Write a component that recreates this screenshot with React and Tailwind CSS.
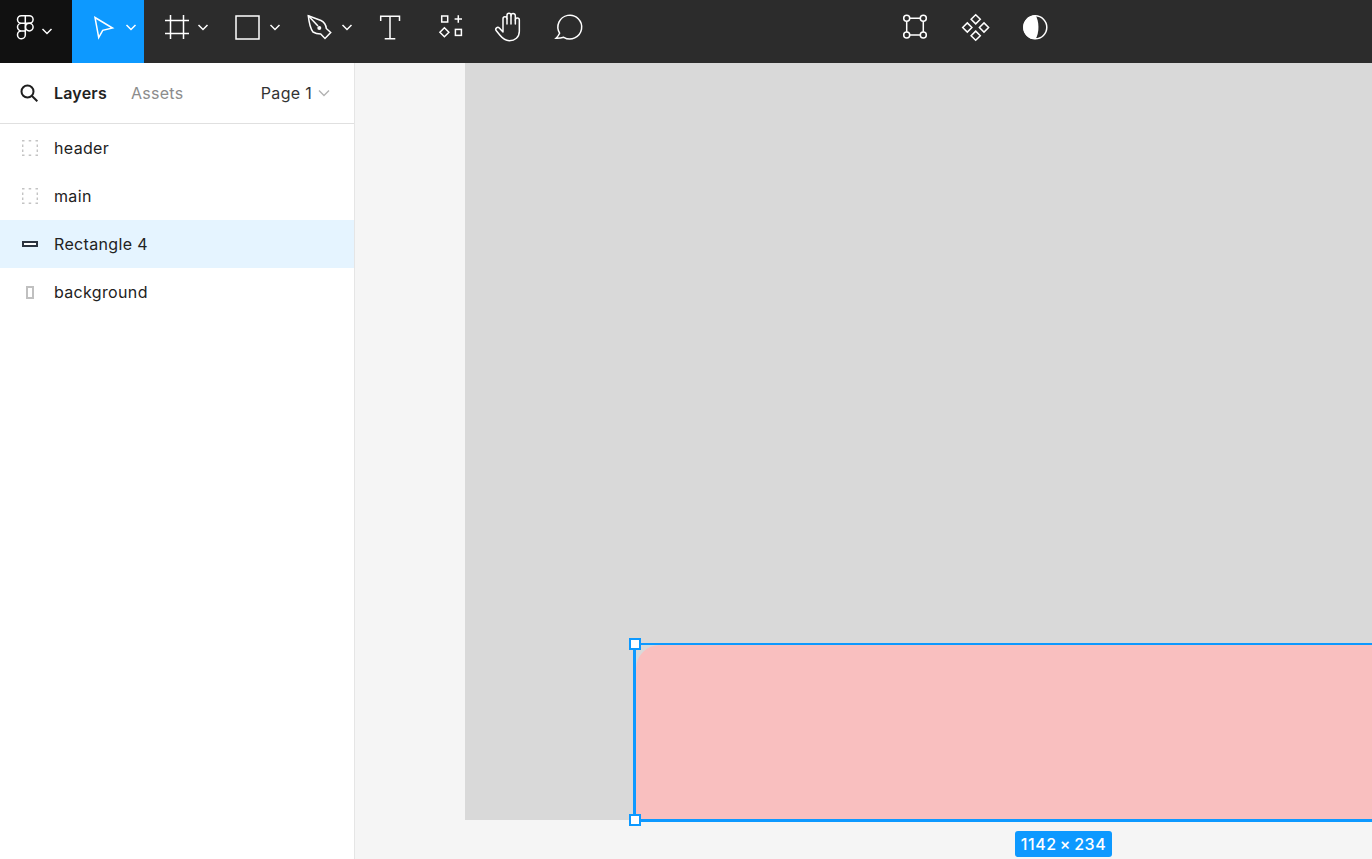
const W = { fill: "none", stroke: "#fff", strokeWidth: 1.5 };

function Cell({ x, w = 72, bg = "", children }) {
  return (
    <button className={`h-full shrink-0 ${bg}`} style={{ width: w }}>
      <svg width={w} height={63} viewBox={`${x} 0 ${w} 63`} className="block" {...W}>
        {children}
      </svg>
    </button>
  );
}

const Chevron = ({ x, y = 27.5 }) => (
  <path d={`M${x - 4.5} ${y - 2.5}l4.5 4.5l4.5-4.5`} fill="none" stroke="#fff" strokeWidth="1.5" />
);

function Toolbar() {
  return (
    <header className="flex h-[63px] shrink-0 bg-[#2c2c2c]">
      <Cell x={0} bg="bg-[#111111]">
        <path d="M21.3 15.7h4v7.6h-4a3.8 3.8 0 0 1 0-7.6zM25.3 15.7h4a3.8 3.8 0 0 1 0 7.6h-4zM21.3 23.3h4v7.6h-4a3.8 3.8 0 0 1 0-7.6zM21.3 30.9h4v3.8a3.9 3.9 0 1 1-4-3.8z" />
        <circle cx="29.3" cy="27.1" r="3.8" />
        <Chevron x={47} y={31.5} />
      </Cell>
      <Cell x={72} bg="bg-[#0d99ff]">
        <path d="M95 17.5L112.5 28L102.7 30.3L98.7 37.5Z" />
        <Chevron x={131} />
      </Cell>
      <Cell x={144}>
        <path d="M170.5 15v24M183.5 15v24M165 20.5h24M165 33.5h24" />
        <Chevron x={203} />
      </Cell>
      <Cell x={216}>
        <rect x="236" y="16" width="23" height="23" />
        <Chevron x={275} />
      </Cell>
      <Cell x={288}>
        <path d="M308.3 15.8L321 20.5C324 22 326 25 326.3 28.5L330.7 32.5L325 38.5L320.7 34C317 34 315 33.3 313 32C310 28 309 22 308.3 15.8Z" />
        <path d="M308.3 15.8L318 26" />
        <circle cx="319.3" cy="28" r="2" fill="#fff" stroke="none" />
        <Chevron x={347} />
      </Cell>
      <Cell x={360} w={60}>
        <path d="M380.7 21V16.2H399.5V21M390 16.2V38.8M384.7 38.8H395.3" />
      </Cell>
      <Cell x={420} w={60}>
        <rect x="441.7" y="16" width="6" height="6" />
        <path d="M458.3 15.3v7.4M454.6 19h7.4" />
        <path d="M444.4 27.8l4.5 4.5l-4.5 4.5l-4.5-4.5z" />
        <rect x="455.4" y="29.4" width="6" height="6" />
      </Cell>
      <Cell x={480} w={60}>
        <g transform="translate(490 8) scale(0.3333)" strokeWidth="4.5" strokeLinecap="round" strokeLinejoin="round">
          <path d="M39 72V32a6 6 0 0 1 12 0V22a6 6 0 0 1 12 0V23a6.5 6.5 0 0 1 13 0V36a6 6 0 0 1 12 0V70C88 88 75 98 58 98C45 98 38 92 30 82L19 68a6 6 0 0 1 9-8L39 72" />
          <path d="M51 32V48M63 23V48M76 36V48" />
        </g>
      </Cell>
      <Cell x={540} w={60}>
        <path d="M556 38.3C557.6 36.8 558.8 34.9 559.6 33.2A11.9 11.9 0 1 1 563.7 37.3C561.5 38 559 38.4 556 38.3Z" />
      </Cell>
      <div className="w-[285px] shrink-0" />
      <Cell x={885} w={60}>
        <path d="M906.7 18.3H923.3V35H906.7Z" />
        {[[906.7, 18.3], [923.3, 18.3], [906.7, 35], [923.3, 35]].map(([cx, cy]) => (
          <circle key={`${cx}-${cy}`} cx={cx} cy={cy} r="3" fill="#2c2c2c" />
        ))}
      </Cell>
      <Cell x={945} w={60}>
        {[[975.7, 19.3], [967.3, 27.5], [984, 27.5], [975.7, 35.7]].map(([cx, cy]) => (
          <path key={`${cx}-${cy}`} d={`M${cx} ${cy - 4.6}l4.6 4.6l-4.6 4.6l-4.6-4.6z`} />
        ))}
      </Cell>
      <Cell x={1005} w={60}>
        <circle cx="1035.3" cy="27.3" r="11.5" />
        <path d="M1035.3 15.3A12 12 0 0 0 1035.3 39.3C1039.5 34 1039.5 20.6 1035.3 15.3Z" fill="#fff" stroke="none" />
      </Cell>
    </header>
  );
}

function FrameIcon() {
  return (
    <svg width="16" height="16" viewBox="0 0 16 16" className="block" fill="none" stroke="#c4c4c4" strokeWidth="1.4">
      <path d="M0 .7h2.5M6.7 .7h2.5M13.5 .7h2.5M0 15.3h2.5M6.7 15.3h2.5M13.5 15.3h2.5M.7 4.5v2.5M.7 9.5v2.5M15.3 4.5v2.5M15.3 9.5v2.5" />
    </svg>
  );
}

function Row({ icon, label, active }) {
  return (
    <div className={`flex h-12 items-center pl-[22px] ${active ? "bg-[#e5f4ff]" : ""}`}>
      <div className="flex w-4 justify-center">{icon}</div>
      <span className="ml-[16px] text-base tracking-[0.34px] text-[#222222]">{label}</span>
    </div>
  );
}

function Sidebar() {
  return (
    <aside className="w-[355px] shrink-0 border-r border-[#e5e5e5] bg-white">
      <div className="flex h-[61px] items-center border-b border-[#e0e0e0] pl-[20px] pr-[24px]">
        <svg width="18" height="18" viewBox="0 0 18 18" className="block" fill="none" stroke="#1e1e1e" strokeWidth="2">
          <circle cx="7.5" cy="7.5" r="6" />
          <path d="M12 12l5.3 5.3" />
        </svg>
        <span className="ml-[16px] text-base font-semibold tracking-[0.2px] text-[#222222]">Layers</span>
        <span className="ml-[24px] text-base tracking-[0.3px] text-[#8c8c8c]">Assets</span>
        <span className="ml-auto text-base tracking-[0.3px] text-[#333333]">Page 1</span>
        <svg width="12" height="8" viewBox="0 0 12 8" className="ml-[6px] block" fill="none" stroke="#b3b3b3" strokeWidth="1.4">
          <path d="M1 1.5l5 5l5-5" />
        </svg>
      </div>
      <div>
        <Row label="header" icon={<FrameIcon />} />
        <Row label="main" icon={<FrameIcon />} />
        <Row
          active
          label="Rectangle 4"
          icon={<div className="h-[6px] w-[16px] border-2 border-[#2c3440] bg-white" />}
        />
        <Row
          label="background"
          icon={<div className="h-[13px] w-[8px] border-2 border-[#c0c0c0] bg-white" />}
        />
      </div>
    </aside>
  );
}

function Handle({ className }) {
  return <div className={`absolute h-3 w-3 border-2 border-[#0d99ff] bg-white ${className}`} />;
}

function Canvas() {
  return (
    <main className="relative min-w-0 flex-1 overflow-hidden bg-[#f5f5f5]">
      <div className="absolute left-[110px] right-0 top-0 h-[757px] bg-[#d9d9d9]" />
      <div className="absolute left-[278px] right-[-10px] top-[580px] h-[179px] border-t-2 border-b-[3px] border-l-[3px] border-[#0d99ff]">
        <div className="h-full w-full rounded-tl-3xl bg-[#f9bfbf]" />
      </div>
      <Handle className="left-[274px] top-[575px]" />
      <Handle className="left-[274px] top-[751px]" />
      <div className="absolute left-[660px] top-[768px] flex h-[26px] w-[97px] items-center justify-center rounded-[3px] bg-[#0d99ff] text-base font-medium tracking-[0.5px] text-white">
        1142{"\u2009"}×{"\u2009"}234
      </div>
    </main>
  );
}

export default function App() {
  return (
    <div className="flex h-screen flex-col overflow-hidden font-['Inter',sans-serif]">
      <Toolbar />
      <div className="flex min-h-0 flex-1">
        <Sidebar />
        <Canvas />
      </div>
    </div>
  );
}
